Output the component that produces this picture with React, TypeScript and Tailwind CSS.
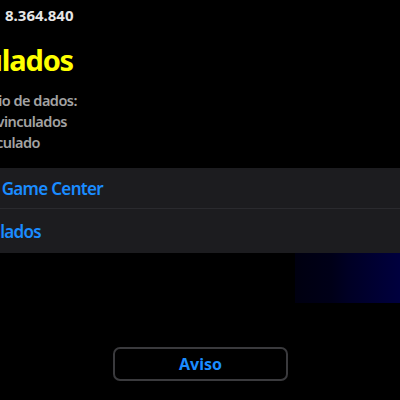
import React from "react";

const font = { fontFamily: '"Noto Sans", "Open Sans", sans-serif' };

function Clip({ w, children, className }: { w: string; children: React.ReactNode; className?: string }) {
  return <div className={`flex justify-end whitespace-nowrap ${w} ${className ?? ""}`}>{children}</div>;
}

export default function App() {
  return (
    <div className="w-[400px] h-[400px] bg-black overflow-hidden flex flex-col" style={font}>
      <div className="pt-[7px] pl-[5px] text-[15px] leading-[16px] font-bold text-[#e6e6e6]">8.364.840</div>

      <Clip w="w-[73px]" className="mt-[22px] text-[29px] leading-[30px] font-bold tracking-[-0.04em] text-[#ffff00]">
        Serviços vinculados
      </Clip>

      <div className="mt-[15px] flex flex-col text-[14.5px] leading-[21px] font-semibold tracking-[-0.035em] text-[#a3a3a3]">
        <Clip w="w-[77px]">Envio de dados:</Clip>
        <Clip w="w-[67px]">Não vinculados</Clip>
        <Clip w="w-[40px]">Vinculado</Clip>
      </div>

      <div className="mt-[15px] h-[85px] flex flex-col bg-[#1c1c1f] text-[17px] font-semibold tracking-[-0.04em] text-[#1a8cff]">
        <div className="h-[40px] pt-[2px] flex items-center">
          <Clip w="w-[103px]">Vincular ao Game Center</Clip>
        </div>
        <div className="h-[1px] bg-[#2a2a2e]" />
        <div className="flex-1 pt-[2px] flex items-center">
          <Clip w="w-[41px]">Ver dados vinculados</Clip>
        </div>
      </div>

      <div className="flex justify-end">
        <div className="w-[105px] h-[50px] bg-[linear-gradient(to_right,#000010_0%,#000018_35%,#000024_50%,#000034_80%,#00003e_100%)]" />
      </div>

      <div className="mt-[44px] ml-[113px] w-[175px] h-[34px] rounded-[7px] border-2 border-[#3a3a3d] flex items-center justify-center text-[16px] font-bold text-[#1a8cff]">
        Aviso
      </div>
    </div>
  );
}
